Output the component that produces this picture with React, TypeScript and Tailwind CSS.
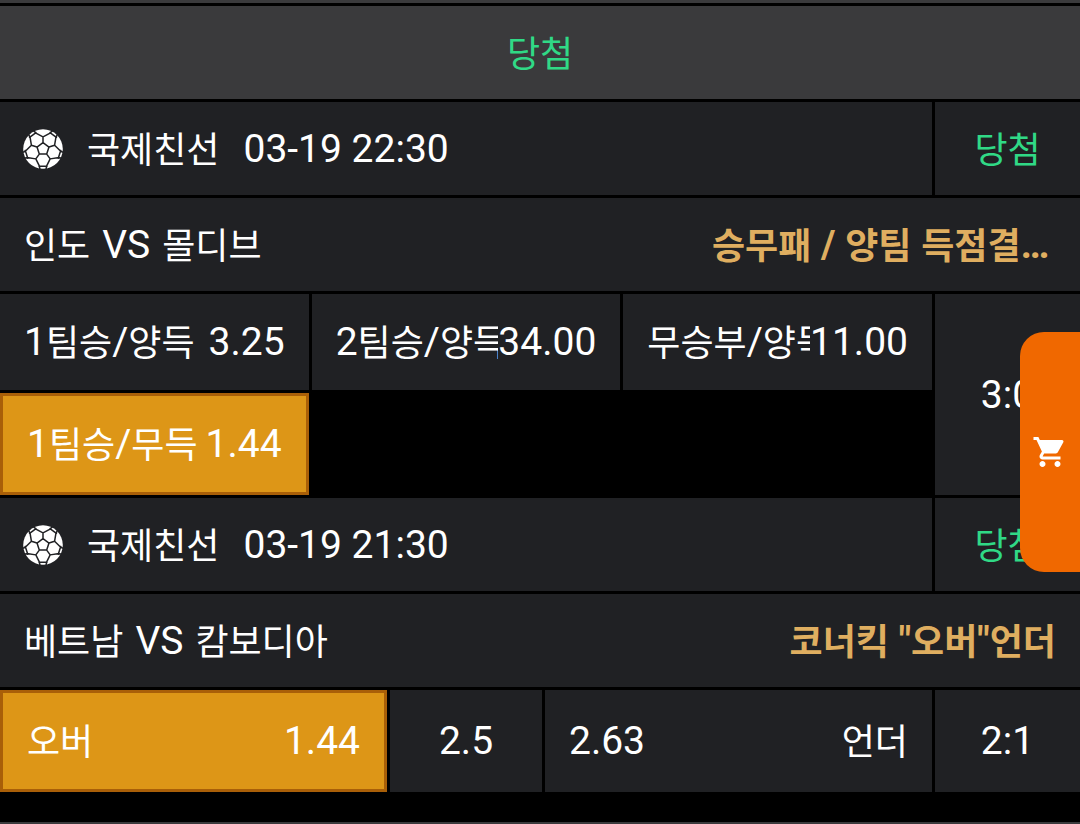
import { MdShoppingCart } from "react-icons/md";

type Odd = { name: string; odds: string; picked?: boolean };

// Hangul is set a step smaller than the Latin text and digits
function Label({ text }: { text: string }) {
  return (
    <>
      {text.split(/([가-힣]+)/).map((part, i) =>
        i % 2 ? (
          <span key={i} className="align-[-1px] text-[36px] leading-none">
            {part}
          </span>
        ) : (
          part
        )
      )}
    </>
  );
}

const polar = (r: number, deg: number) => {
  const a = (deg * Math.PI) / 180;
  return `${(20 + r * Math.cos(a)).toFixed(2)} ${(20 + r * Math.sin(a)).toFixed(2)}`;
};

// Seams repeat around the centre pentagon, one set for each corner
const seams = [-90, -18, 54, 126, 198]
  .map((d) =>
    [
      `M${polar(6.3, d)} L${polar(6.3, d + 72)}`,
      `M${polar(6.3, d)} L${polar(12.2, d)}`,
      `M${polar(20, d - 27)} L${polar(17, d - 23)} L${polar(12.2, d)} L${polar(17, d + 23)} L${polar(20, d + 27)}`,
      `M${polar(17.8, d + 23)} L${polar(17.8, d + 49)}`,
    ].join(" ")
  )
  .join(" ");

function SoccerBall() {
  return (
    <svg viewBox="0 0 40 40" className="size-10 shrink-0" aria-hidden="true">
      <circle cx="20" cy="20" r="19.8" fill="#fff" />
      <path
        d={seams}
        fill="none"
        stroke="#202124"
        strokeWidth="1.5"
        strokeLinejoin="round"
        strokeLinecap="round"
      />
    </svg>
  );
}

function GameHeader({ league, time }: { league: string; time: string }) {
  return (
    <div className="flex gap-[3px]">
      <div className="flex h-[93px] min-w-0 flex-1 items-center gap-6 bg-[#202124] px-[23px]">
        <SoccerBall />
        <span>
          <Label text={league} />
        </span>
        <time>{time}</time>
      </div>
      <div className="flex w-[145px] items-center justify-center bg-[#202124] text-[#30d986]">
        <span>
          <Label text="당첨" />
        </span>
      </div>
    </div>
  );
}

function GameTitle({
  home,
  away,
  market,
}: {
  home: string;
  away: string;
  market: string;
}) {
  return (
    <div className="flex h-[93px] items-center justify-between bg-[#202124] px-6">
      <h2 className="flex gap-3">
        <span>
          <Label text={home} />
        </span>
        <span>VS</span>
        <span>
          <Label text={away} />
        </span>
      </h2>
      <span
        className={`font-bold text-[#dfae60] ${
          market.endsWith("…") ? "min-w-[344px]" : ""
        }`}
      >
        <Label text={market} />
      </span>
    </div>
  );
}

function OddButton({ name, odds, picked }: Odd) {
  return (
    <button
      type="button"
      className={`flex w-full min-w-0 items-center justify-between px-6 ${
        picked
          ? "h-[102px] border-[3px] border-[#a95f08] bg-[#dd9617]"
          : "h-24 bg-[#202124]"
      }`}
    >
      <span className="min-w-0 overflow-hidden whitespace-nowrap">
        <Label text={name} />
      </span>
      <span className="shrink-0">{odds}</span>
    </button>
  );
}

function Score({ value }: { value: string }) {
  return (
    <div className="flex w-[145px] shrink-0 items-center justify-center bg-[#202124]">
      {value}
    </div>
  );
}

const odds: Odd[] = [
  { name: "1팀승/양득", odds: "3.25" },
  { name: "2팀승/양득", odds: "34.00" },
  { name: "무승부/양득", odds: "11.00" },
  { name: "1팀승/무득", odds: "1.44", picked: true },
];

export default function App() {
  return (
    <main
      lang="ko"
      className="min-h-screen bg-black font-[Roboto,'Noto_Sans_CJK_KR',sans-serif] text-[39px] leading-[48px] text-white"
    >
      <div className="border-y-[3px] border-[#3a3a3c] pb-[30px]">
        <div className="flex flex-col gap-[3px] pt-[3px]">
          <h1 className="flex h-[93px] items-center justify-center bg-[#3a3a3c] text-[#30d986]">
            <span>
              <Label text="당첨" />
            </span>
          </h1>

          <GameHeader league="국제친선" time="03-19 22:30" />
          <GameTitle home="인도" away="몰디브" market="승무패 / 양팀 득점결…" />
          <div className="flex gap-[3px]">
            <div className="grid min-w-0 flex-1 grid-cols-3 gap-[3px]">
              {odds.map((odd) => (
                <OddButton key={odd.name} {...odd} />
              ))}
            </div>
            <Score value="3:0" />
          </div>

          <GameHeader league="국제친선" time="03-19 21:30" />
          <GameTitle home="베트남" away="캄보디아" market={'코너킥 "오버"언더'} />
          <div className="flex gap-[3px]">
            <div className="grid min-w-0 flex-1 grid-cols-[1fr_152px_1fr] gap-[3px]">
              <OddButton name="오버" odds="1.44" picked />
              <div className="flex items-center justify-center bg-[#202124]">
                2.5
              </div>
              <button
                type="button"
                className="flex items-center justify-between bg-[#202124] px-6"
              >
                <span>2.63</span>
                <span>
                  <Label text="언더" />
                </span>
              </button>
            </div>
            <Score value="2:1" />
          </div>
        </div>
      </div>

      <button
        type="button"
        aria-label="카트"
        className="fixed top-[332px] right-0 flex h-60 w-15 items-center justify-center rounded-l-3xl bg-[#f06800]"
      >
        <MdShoppingCart className="size-9" />
      </button>
    </main>
  );
}
